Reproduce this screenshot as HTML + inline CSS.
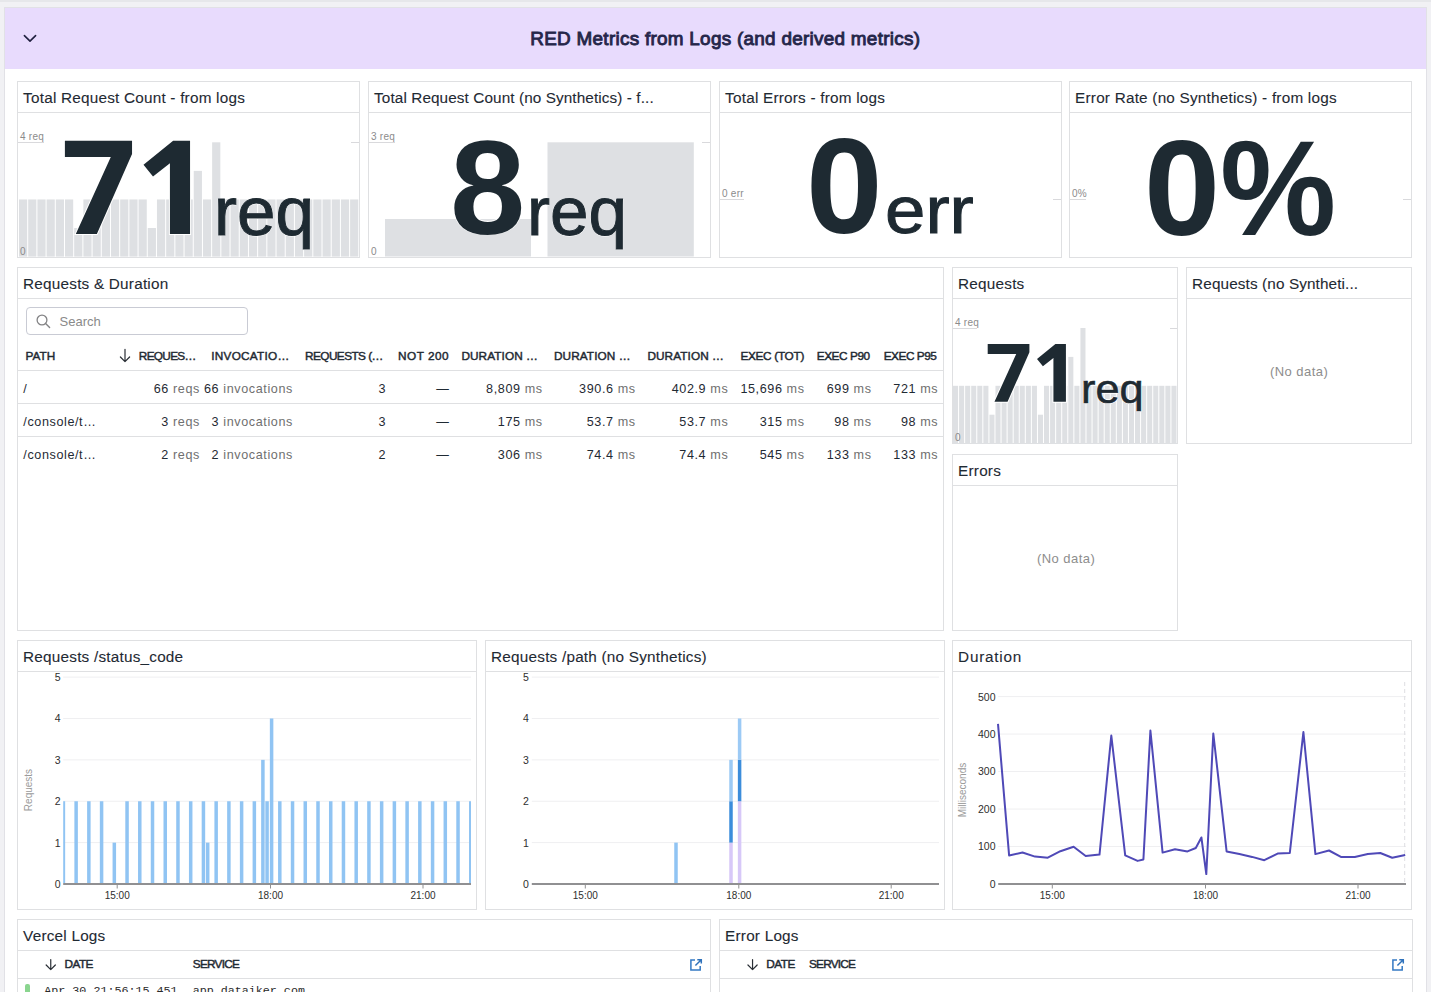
<!DOCTYPE html><html><head><meta charset="utf-8"><title>RED Metrics</title><style>
*{box-sizing:border-box;margin:0;padding:0}
html,body{width:1431px;height:992px;overflow:hidden;background:#f1f1f4;font-family:"Liberation Sans",sans-serif;color:#1f2a33}
.a{position:absolute;white-space:nowrap}
.grp{position:absolute;left:4px;top:7px;width:1423px;height:1000px;background:#fff;border:1px solid #e1e1e6}
.ghead{position:absolute;left:5px;top:8px;width:1421px;height:61px;background:#e8dbfd}
.w{position:absolute;border:1px solid #dfe0e2;background:#fff}
.wt{position:absolute;left:0;top:0;right:0;height:31px;border-bottom:1px solid #dfe0e2}
.t{position:absolute;white-space:nowrap;font-size:15px;line-height:15px;color:#1f2a33;letter-spacing:0.25px}
.lbl{position:absolute;white-space:nowrap;font-size:10px;line-height:10px;color:#8b8b8b;letter-spacing:0.25px}
.big{position:absolute;white-space:nowrap;color:#1e2a32;line-height:1}
.nd{position:absolute;white-space:nowrap;font-size:13px;line-height:13px;color:#8d8d8d;letter-spacing:0.45px}
.th{position:absolute;white-space:nowrap;font-size:12px;line-height:12px;font-weight:bold;color:#1f2a33;letter-spacing:0.1px}
.td{position:absolute;white-space:nowrap;font-size:13px;line-height:13px;color:#1f2a33}
.td span{color:#7a7a7a}
.ax{position:absolute;white-space:nowrap;font-size:10.5px;line-height:11px;color:#333}
</style></head><body>
<div class="a" style="left:0;top:0;width:1431px;height:2px;background:#e6e7ea"></div>
<div class="grp"></div>
<div class="ghead"></div>
<svg class="a" style="left:0;top:0" width="60" height="60" viewBox="0 0 60 60"><path d="M24.4 35.6 L30 41.1 L35.6 35.6" fill="none" stroke="#20203f" stroke-width="1.6" stroke-linecap="round" stroke-linejoin="round"/></svg>
<div class="a" style="left:530.30px;top:29.83px;font-size:18.9px;line-height:18.9px;font-weight:normal;color:#25264a;letter-spacing:0.28px;font-family:'Liberation Sans';-webkit-text-stroke:0.9px #25264a">RED Metrics from Logs (and derived metrics)</div>
<div class="w" style="left:17px;top:81px;width:343px;height:177px"><div class="wt"></div></div>
<div class="a" style="left:23.10px;top:89.70px;font-size:15.3px;line-height:15.3px;font-weight:normal;color:#1f2a33;letter-spacing:0.22px;font-family:'Liberation Sans';-webkit-text-stroke:0.1px #1f2a33">Total Request Count - from logs</div>
<div class="w" style="left:368px;top:81px;width:343px;height:177px"><div class="wt"></div></div>
<div class="a" style="left:374.10px;top:89.70px;font-size:15.3px;line-height:15.3px;font-weight:normal;color:#1f2a33;letter-spacing:0.1px;font-family:'Liberation Sans';-webkit-text-stroke:0.1px #1f2a33">Total Request Count (no Synthetics) - f...</div>
<div class="w" style="left:719px;top:81px;width:343px;height:177px"><div class="wt"></div></div>
<div class="a" style="left:725.10px;top:89.70px;font-size:15.3px;line-height:15.3px;font-weight:normal;color:#1f2a33;letter-spacing:0.22px;font-family:'Liberation Sans';-webkit-text-stroke:0.1px #1f2a33">Total Errors - from logs</div>
<div class="w" style="left:1069px;top:81px;width:343px;height:177px"><div class="wt"></div></div>
<div class="a" style="left:1075.10px;top:89.70px;font-size:15.3px;line-height:15.3px;font-weight:normal;color:#1f2a33;letter-spacing:0.22px;font-family:'Liberation Sans';-webkit-text-stroke:0.1px #1f2a33">Error Rate (no Synthetics) - from logs</div>
<div class="w" style="left:17px;top:267px;width:927px;height:364px"><div class="wt"></div></div>
<div class="a" style="left:23.10px;top:275.70px;font-size:15.3px;line-height:15.3px;font-weight:normal;color:#1f2a33;letter-spacing:0.22px;font-family:'Liberation Sans';-webkit-text-stroke:0.1px #1f2a33">Requests &amp; Duration</div>
<div class="w" style="left:952px;top:267px;width:226px;height:177px"><div class="wt"></div></div>
<div class="a" style="left:958.10px;top:275.70px;font-size:15.3px;line-height:15.3px;font-weight:normal;color:#1f2a33;letter-spacing:0.22px;font-family:'Liberation Sans';-webkit-text-stroke:0.1px #1f2a33">Requests</div>
<div class="w" style="left:1186px;top:267px;width:226px;height:177px"><div class="wt"></div></div>
<div class="a" style="left:1192.10px;top:275.70px;font-size:15.3px;line-height:15.3px;font-weight:normal;color:#1f2a33;letter-spacing:0.12px;font-family:'Liberation Sans';-webkit-text-stroke:0.1px #1f2a33">Requests (no Syntheti...</div>
<div class="w" style="left:952px;top:454px;width:226px;height:177px"><div class="wt"></div></div>
<div class="a" style="left:958.10px;top:462.70px;font-size:15.3px;line-height:15.3px;font-weight:normal;color:#1f2a33;letter-spacing:0.22px;font-family:'Liberation Sans';-webkit-text-stroke:0.1px #1f2a33">Errors</div>
<div class="w" style="left:17px;top:640px;width:460px;height:270px"><div class="wt"></div></div>
<div class="a" style="left:23.10px;top:648.70px;font-size:15.3px;line-height:15.3px;font-weight:normal;color:#1f2a33;letter-spacing:0.22px;font-family:'Liberation Sans';-webkit-text-stroke:0.1px #1f2a33">Requests /status_code</div>
<div class="w" style="left:485px;top:640px;width:460px;height:270px"><div class="wt"></div></div>
<div class="a" style="left:491.10px;top:648.70px;font-size:15.3px;line-height:15.3px;font-weight:normal;color:#1f2a33;letter-spacing:0.22px;font-family:'Liberation Sans';-webkit-text-stroke:0.1px #1f2a33">Requests /path (no Synthetics)</div>
<div class="w" style="left:952px;top:640px;width:460px;height:270px"><div class="wt"></div></div>
<div class="a" style="left:958.10px;top:648.70px;font-size:15.3px;line-height:15.3px;font-weight:normal;color:#1f2a33;letter-spacing:0.75px;font-family:'Liberation Sans';-webkit-text-stroke:0.1px #1f2a33">Duration</div>
<div class="w" style="left:17px;top:919px;width:694px;height:100px"><div class="wt"></div></div>
<div class="a" style="left:23.10px;top:927.70px;font-size:15.3px;line-height:15.3px;font-weight:normal;color:#1f2a33;letter-spacing:0.22px;font-family:'Liberation Sans';-webkit-text-stroke:0.1px #1f2a33">Vercel Logs</div>
<div class="w" style="left:719px;top:919px;width:694px;height:100px"><div class="wt"></div></div>
<div class="a" style="left:725.10px;top:927.70px;font-size:15.3px;line-height:15.3px;font-weight:normal;color:#1f2a33;letter-spacing:0.22px;font-family:'Liberation Sans';-webkit-text-stroke:0.1px #1f2a33">Error Logs</div>
<svg class="a" style="left:0;top:0" width="1431" height="992"><g fill="#dee0e3"><rect x="19.00" y="199.45" width="8.20" height="57.15"/><rect x="28.20" y="199.45" width="8.20" height="57.15"/><rect x="37.39" y="199.45" width="8.20" height="57.15"/><rect x="46.59" y="199.45" width="8.20" height="57.15"/><rect x="55.79" y="199.45" width="8.20" height="57.15"/><rect x="64.99" y="199.45" width="8.20" height="57.15"/><rect x="74.18" y="228.03" width="8.20" height="28.57"/><rect x="83.38" y="199.45" width="8.20" height="57.15"/><rect x="92.58" y="199.45" width="8.20" height="57.15"/><rect x="101.78" y="199.45" width="8.20" height="57.15"/><rect x="110.97" y="199.45" width="8.20" height="57.15"/><rect x="120.17" y="199.45" width="8.20" height="57.15"/><rect x="129.37" y="199.45" width="8.20" height="57.15"/><rect x="138.56" y="199.45" width="8.20" height="57.15"/><rect x="147.76" y="228.03" width="8.20" height="28.57"/><rect x="156.96" y="199.45" width="8.20" height="57.15"/><rect x="166.16" y="199.45" width="8.20" height="57.15"/><rect x="175.35" y="199.45" width="8.20" height="57.15"/><rect x="184.55" y="199.45" width="8.20" height="57.15"/><rect x="193.75" y="170.88" width="8.20" height="85.73"/><rect x="202.95" y="199.45" width="8.20" height="57.15"/><rect x="212.14" y="142.30" width="8.20" height="114.30"/><rect x="221.34" y="199.45" width="8.20" height="57.15"/><rect x="230.54" y="199.45" width="8.20" height="57.15"/><rect x="239.74" y="199.45" width="8.20" height="57.15"/><rect x="248.93" y="199.45" width="8.20" height="57.15"/><rect x="258.13" y="199.45" width="8.20" height="57.15"/><rect x="267.33" y="199.45" width="8.20" height="57.15"/><rect x="276.52" y="199.45" width="8.20" height="57.15"/><rect x="285.72" y="199.45" width="8.20" height="57.15"/><rect x="294.92" y="199.45" width="8.20" height="57.15"/><rect x="304.12" y="199.45" width="8.20" height="57.15"/><rect x="313.31" y="199.45" width="8.20" height="57.15"/><rect x="322.51" y="199.45" width="8.20" height="57.15"/><rect x="331.71" y="199.45" width="8.20" height="57.15"/><rect x="340.91" y="199.45" width="8.20" height="57.15"/><rect x="350.10" y="199.45" width="8.20" height="57.15"/></g></svg>
<svg class="a" style="left:0;top:0" width="1431" height="992"><g fill="#dee0e3"><rect x="953.00" y="385.80" width="5.07" height="57.80"/><rect x="959.07" y="385.80" width="5.07" height="57.80"/><rect x="965.14" y="385.80" width="5.07" height="57.80"/><rect x="971.20" y="385.80" width="5.07" height="57.80"/><rect x="977.27" y="385.80" width="5.07" height="57.80"/><rect x="983.34" y="385.80" width="5.07" height="57.80"/><rect x="989.41" y="414.70" width="5.07" height="28.90"/><rect x="995.47" y="385.80" width="5.07" height="57.80"/><rect x="1001.54" y="385.80" width="5.07" height="57.80"/><rect x="1007.61" y="385.80" width="5.07" height="57.80"/><rect x="1013.68" y="385.80" width="5.07" height="57.80"/><rect x="1019.74" y="385.80" width="5.07" height="57.80"/><rect x="1025.81" y="385.80" width="5.07" height="57.80"/><rect x="1031.88" y="385.80" width="5.07" height="57.80"/><rect x="1037.95" y="414.70" width="5.07" height="28.90"/><rect x="1044.01" y="385.80" width="5.07" height="57.80"/><rect x="1050.08" y="385.80" width="5.07" height="57.80"/><rect x="1056.15" y="385.80" width="5.07" height="57.80"/><rect x="1062.22" y="385.80" width="5.07" height="57.80"/><rect x="1068.28" y="356.90" width="5.07" height="86.70"/><rect x="1074.35" y="385.80" width="5.07" height="57.80"/><rect x="1080.42" y="328.00" width="5.07" height="115.60"/><rect x="1086.49" y="385.80" width="5.07" height="57.80"/><rect x="1092.55" y="385.80" width="5.07" height="57.80"/><rect x="1098.62" y="385.80" width="5.07" height="57.80"/><rect x="1104.69" y="385.80" width="5.07" height="57.80"/><rect x="1110.76" y="385.80" width="5.07" height="57.80"/><rect x="1116.82" y="385.80" width="5.07" height="57.80"/><rect x="1122.89" y="385.80" width="5.07" height="57.80"/><rect x="1128.96" y="385.80" width="5.07" height="57.80"/><rect x="1135.03" y="385.80" width="5.07" height="57.80"/><rect x="1141.09" y="385.80" width="5.07" height="57.80"/><rect x="1147.16" y="385.80" width="5.07" height="57.80"/><rect x="1153.23" y="385.80" width="5.07" height="57.80"/><rect x="1159.30" y="385.80" width="5.07" height="57.80"/><rect x="1165.36" y="385.80" width="5.07" height="57.80"/><rect x="1171.43" y="385.80" width="5.07" height="57.80"/></g></svg>
<svg class="a" style="left:0;top:0" width="1431" height="992"><g fill="#dee0e3"><rect x="385" y="219" width="146" height="37.5"/><rect x="547.5" y="142.3" width="146.3" height="114.2"/></g></svg>
<div class="lbl" style="left:20px;top:131.5px">4 req</div>
<div class="a" style="left:18px;top:142px;width:26px;height:1px;background:#d9d9dc"></div>
<div class="a" style="left:351px;top:142px;width:8px;height:1px;background:#d9d9dc"></div>
<div class="lbl" style="left:20px;top:247px">0</div>
<div class="lbl" style="left:371px;top:131.5px">3 req</div>
<div class="a" style="left:369px;top:142px;width:26px;height:1px;background:#d9d9dc"></div>
<div class="a" style="left:702px;top:142px;width:8px;height:1px;background:#d9d9dc"></div>
<div class="lbl" style="left:371px;top:247px">0</div>
<div class="lbl" style="left:722px;top:189px">0 err</div>
<div class="a" style="left:720px;top:199px;width:24px;height:1px;background:#d9d9dc"></div>
<div class="a" style="left:1053px;top:199px;width:8px;height:1px;background:#d9d9dc"></div>
<div class="lbl" style="left:1072px;top:189px">0%</div>
<div class="a" style="left:1070px;top:199px;width:16px;height:1px;background:#d9d9dc"></div>
<div class="a" style="left:1403px;top:199px;width:8px;height:1px;background:#d9d9dc"></div>
<div class="lbl" style="left:955px;top:318px">4 req</div>
<div class="a" style="left:953px;top:328px;width:24px;height:1px;background:#d9d9dc"></div>
<div class="a" style="left:1170px;top:328px;width:7px;height:1px;background:#d9d9dc"></div>
<div class="lbl" style="left:955px;top:433px">0</div>
<svg class="a" style="left:0;top:0" width="1431" height="992"><path fill="#1e2a32" stroke="#fff" stroke-width="2" paint-order="stroke" stroke-linejoin="miter" d="M64.90 140.70 L132.04 140.70 L132.04 154.03 L96.87 233.90 L75.80 233.90 L110.80 157.04 L64.90 157.04 Z M173.14 140.70 L190.05 140.70 L190.05 233.90 L169.93 233.90 L169.93 163.23 L153.01 176.54 L143.50 164.83 Z"/></svg>
<div class="big" style="left:213.99px;top:177.71px;font-size:69px;font-weight:normal;transform-origin:0 0;transform:scale(1.0022,0.9902);color:#1e2a32;-webkit-text-stroke:1.0px #1e2a32;text-shadow:0.8px 0 #fff,-0.8px 0 #fff,0 0.8px #fff,0 -0.8px #fff">req</div>
<div class="big" style="left:449.53px;top:119.88px;font-size:130px;font-weight:bold;transform-origin:0 0;transform:scale(1.0422,1.0326);color:#1e2a32;-webkit-text-stroke:0px #1e2a32;text-shadow:0.8px 0 #fff,-0.8px 0 #fff,0 0.8px #fff,0 -0.8px #fff">8</div>
<div class="big" style="left:527.49px;top:176.68px;font-size:69px;font-weight:normal;transform-origin:0 0;transform:scale(1.0033,1.0059);color:#1e2a32;-webkit-text-stroke:1.0px #1e2a32;text-shadow:0.8px 0 #fff,-0.8px 0 #fff,0 0.8px #fff,0 -0.8px #fff">req</div>
<div class="big" style="left:805.60px;top:119.34px;font-size:130px;font-weight:bold;transform-origin:0 0;transform:scale(1.0597,1.0402);color:#1e2a32;-webkit-text-stroke:0px #1e2a32;text-shadow:0.8px 0 #fff,-0.8px 0 #fff,0 0.8px #fff,0 -0.8px #fff">0</div>
<div class="big" style="left:884.60px;top:177.74px;font-size:69px;font-weight:normal;transform-origin:0 0;transform:scale(1.0524,0.9553);color:#1e2a32;-webkit-text-stroke:1.0px #1e2a32;text-shadow:0.8px 0 #fff,-0.8px 0 #fff,0 0.8px #fff,0 -0.8px #fff">err</div>
<div class="big" style="left:1144.23px;top:120.22px;font-size:130px;font-weight:bold;transform-origin:0 0;transform:scale(1.0532,1.0413);color:#1e2a32;-webkit-text-stroke:0px #1e2a32;text-shadow:0.8px 0 #fff,-0.8px 0 #fff,0 0.8px #fff,0 -0.8px #fff">0</div>
<div class="big" style="left:1220.39px;top:120.22px;font-size:130px;font-weight:bold;transform-origin:0 0;transform:scale(1.0046,1.0413);color:#1e2a32;-webkit-text-stroke:0px #1e2a32;text-shadow:0.8px 0 #fff,-0.8px 0 #fff,0 0.8px #fff,0 -0.8px #fff">%</div>
<svg class="a" style="left:0;top:0" width="1431" height="992"><path fill="#1e2a32" stroke="#fff" stroke-width="2" paint-order="stroke" stroke-linejoin="miter" d="M987.70 343.90 L1029.41 343.90 L1029.41 352.18 L1007.56 401.80 L994.47 401.80 L1016.22 354.05 L987.70 354.05 Z M1055.41 343.90 L1065.92 343.90 L1065.92 401.80 L1053.42 401.80 L1053.42 357.89 L1042.91 366.16 L1037.00 358.89 Z"/></svg>
<div class="big" style="left:1080.95px;top:367.65px;font-size:44px;font-weight:normal;transform-origin:0 0;transform:scale(0.9845,0.9424);color:#1e2a32;-webkit-text-stroke:0.65px #1e2a32;text-shadow:0.8px 0 #fff,-0.8px 0 #fff,0 0.8px #fff,0 -0.8px #fff">req</div>
<div class="nd" style="left:1270px;top:365px">(No data)</div>
<div class="nd" style="left:1037px;top:552px">(No data)</div>
<div class="a" style="left:26px;top:307px;width:222px;height:28px;border:1px solid #c9cbd4;border-radius:4px;background:#fff"></div>
<svg class="a" style="left:0;top:0" width="300" height="400"><circle cx="42" cy="320" r="4.9" fill="none" stroke="#838385" stroke-width="1.3"/><path d="M45.6 323.6 L49.6 327.6" stroke="#838385" stroke-width="1.4" stroke-linecap="round"/></svg>
<div class="a" style="left:59.50px;top:314.70px;font-size:13px;line-height:13px;font-weight:normal;color:#8a8a8a;letter-spacing:0px;font-family:'Liberation Sans'">Search</div>
<div class="a" style="left:25.60px;top:351.26px;font-size:11.8px;line-height:11.8px;font-weight:normal;color:#1f2a33;letter-spacing:0px;font-family:'Liberation Sans';-webkit-text-stroke:0.45px #1f2a33">PATH</div>
<div class="a" style="left:138.80px;top:351.26px;font-size:11.8px;line-height:11.8px;font-weight:normal;color:#1f2a33;letter-spacing:-0.68px;font-family:'Liberation Sans';-webkit-text-stroke:0.45px #1f2a33">REQUES…</div>
<div class="a" style="left:211.30px;top:351.26px;font-size:11.8px;line-height:11.8px;font-weight:normal;color:#1f2a33;letter-spacing:0.24px;font-family:'Liberation Sans';-webkit-text-stroke:0.45px #1f2a33">INVOCATIO…</div>
<div class="a" style="left:305.00px;top:351.26px;font-size:11.8px;line-height:11.8px;font-weight:normal;color:#1f2a33;letter-spacing:-0.56px;font-family:'Liberation Sans';-webkit-text-stroke:0.45px #1f2a33">REQUESTS (…</div>
<div class="a" style="left:398.00px;top:351.26px;font-size:11.8px;line-height:11.8px;font-weight:normal;color:#1f2a33;letter-spacing:0.5px;font-family:'Liberation Sans';-webkit-text-stroke:0.45px #1f2a33">NOT 200</div>
<div class="a" style="left:461.40px;top:351.26px;font-size:11.8px;line-height:11.8px;font-weight:normal;color:#1f2a33;letter-spacing:0.08px;font-family:'Liberation Sans';-webkit-text-stroke:0.45px #1f2a33">DURATION …</div>
<div class="a" style="left:554.00px;top:351.26px;font-size:11.8px;line-height:11.8px;font-weight:normal;color:#1f2a33;letter-spacing:0.08px;font-family:'Liberation Sans';-webkit-text-stroke:0.45px #1f2a33">DURATION …</div>
<div class="a" style="left:647.40px;top:351.26px;font-size:11.8px;line-height:11.8px;font-weight:normal;color:#1f2a33;letter-spacing:0.08px;font-family:'Liberation Sans';-webkit-text-stroke:0.45px #1f2a33">DURATION …</div>
<div class="a" style="left:740.40px;top:351.26px;font-size:11.8px;line-height:11.8px;font-weight:normal;color:#1f2a33;letter-spacing:-0.3px;font-family:'Liberation Sans';-webkit-text-stroke:0.45px #1f2a33">EXEC (TOT)</div>
<div class="a" style="left:816.70px;top:351.26px;font-size:11.8px;line-height:11.8px;font-weight:normal;color:#1f2a33;letter-spacing:-0.43px;font-family:'Liberation Sans';-webkit-text-stroke:0.45px #1f2a33">EXEC P90</div>
<div class="a" style="left:883.70px;top:351.26px;font-size:11.8px;line-height:11.8px;font-weight:normal;color:#1f2a33;letter-spacing:-0.47px;font-family:'Liberation Sans';-webkit-text-stroke:0.45px #1f2a33">EXEC P95</div>
<svg class="a" style="left:0;top:0" width="1431" height="992"><path d="M125.00 349.30 L125.00 361.60 M120.40 357.00 L125.00 361.60 L129.60 357.00" fill="none" stroke="#2a2f36" stroke-width="1.2" stroke-linecap="round" stroke-linejoin="round"/></svg>
<div class="a" style="left:18px;top:370px;width:925px;height:1px;background:#dfe0e2"></div>
<div class="a" style="left:18px;top:403px;width:925px;height:1px;background:#dfe0e2"></div>
<div class="a" style="left:18px;top:436px;width:925px;height:1px;background:#dfe0e2"></div>
<div class="a" style="left:23.30px;top:383.36px;font-size:12.6px;line-height:12.6px;font-weight:normal;color:#1f2a33;letter-spacing:0.6px;font-family:'Liberation Sans'">/</div>
<div class="a" style="right:1231.10px;top:383.36px;font-size:12.6px;line-height:12.6px;font-weight:normal;color:#1f2a33;letter-spacing:0.6px;font-family:'Liberation Sans';text-align:right">66<span style="color:#6f6f6f"> reqs</span></div>
<div class="a" style="right:1138.10px;top:383.36px;font-size:12.6px;line-height:12.6px;font-weight:normal;color:#1f2a33;letter-spacing:0.6px;font-family:'Liberation Sans';text-align:right">66<span style="color:#6f6f6f"> invocations</span></div>
<div class="a" style="right:1044.90px;top:383.36px;font-size:12.6px;line-height:12.6px;font-weight:normal;color:#1f2a33;letter-spacing:0.6px;font-family:'Liberation Sans';text-align:right">3</div>
<div class="a" style="right:981.50px;top:383.36px;font-size:12.6px;line-height:12.6px;font-weight:normal;color:#1f2a33;letter-spacing:0.6px;font-family:'Liberation Sans';text-align:right">—</div>
<div class="a" style="right:888.30px;top:383.36px;font-size:12.6px;line-height:12.6px;font-weight:normal;color:#1f2a33;letter-spacing:0.6px;font-family:'Liberation Sans';text-align:right">8,809<span style="color:#6f6f6f"> ms</span></div>
<div class="a" style="right:795.30px;top:383.36px;font-size:12.6px;line-height:12.6px;font-weight:normal;color:#1f2a33;letter-spacing:0.6px;font-family:'Liberation Sans';text-align:right">390.6<span style="color:#6f6f6f"> ms</span></div>
<div class="a" style="right:702.70px;top:383.36px;font-size:12.6px;line-height:12.6px;font-weight:normal;color:#1f2a33;letter-spacing:0.6px;font-family:'Liberation Sans';text-align:right">402.9<span style="color:#6f6f6f"> ms</span></div>
<div class="a" style="right:626.40px;top:383.36px;font-size:12.6px;line-height:12.6px;font-weight:normal;color:#1f2a33;letter-spacing:0.6px;font-family:'Liberation Sans';text-align:right">15,696<span style="color:#6f6f6f"> ms</span></div>
<div class="a" style="right:559.40px;top:383.36px;font-size:12.6px;line-height:12.6px;font-weight:normal;color:#1f2a33;letter-spacing:0.6px;font-family:'Liberation Sans';text-align:right">699<span style="color:#6f6f6f"> ms</span></div>
<div class="a" style="right:492.80px;top:383.36px;font-size:12.6px;line-height:12.6px;font-weight:normal;color:#1f2a33;letter-spacing:0.6px;font-family:'Liberation Sans';text-align:right">721<span style="color:#6f6f6f"> ms</span></div>
<div class="a" style="left:23.30px;top:416.36px;font-size:12.6px;line-height:12.6px;font-weight:normal;color:#1f2a33;letter-spacing:0.6px;font-family:'Liberation Sans'">/console/t…</div>
<div class="a" style="right:1231.10px;top:416.36px;font-size:12.6px;line-height:12.6px;font-weight:normal;color:#1f2a33;letter-spacing:0.6px;font-family:'Liberation Sans';text-align:right">3<span style="color:#6f6f6f"> reqs</span></div>
<div class="a" style="right:1138.10px;top:416.36px;font-size:12.6px;line-height:12.6px;font-weight:normal;color:#1f2a33;letter-spacing:0.6px;font-family:'Liberation Sans';text-align:right">3<span style="color:#6f6f6f"> invocations</span></div>
<div class="a" style="right:1044.90px;top:416.36px;font-size:12.6px;line-height:12.6px;font-weight:normal;color:#1f2a33;letter-spacing:0.6px;font-family:'Liberation Sans';text-align:right">3</div>
<div class="a" style="right:981.50px;top:416.36px;font-size:12.6px;line-height:12.6px;font-weight:normal;color:#1f2a33;letter-spacing:0.6px;font-family:'Liberation Sans';text-align:right">—</div>
<div class="a" style="right:888.30px;top:416.36px;font-size:12.6px;line-height:12.6px;font-weight:normal;color:#1f2a33;letter-spacing:0.6px;font-family:'Liberation Sans';text-align:right">175<span style="color:#6f6f6f"> ms</span></div>
<div class="a" style="right:795.30px;top:416.36px;font-size:12.6px;line-height:12.6px;font-weight:normal;color:#1f2a33;letter-spacing:0.6px;font-family:'Liberation Sans';text-align:right">53.7<span style="color:#6f6f6f"> ms</span></div>
<div class="a" style="right:702.70px;top:416.36px;font-size:12.6px;line-height:12.6px;font-weight:normal;color:#1f2a33;letter-spacing:0.6px;font-family:'Liberation Sans';text-align:right">53.7<span style="color:#6f6f6f"> ms</span></div>
<div class="a" style="right:626.40px;top:416.36px;font-size:12.6px;line-height:12.6px;font-weight:normal;color:#1f2a33;letter-spacing:0.6px;font-family:'Liberation Sans';text-align:right">315<span style="color:#6f6f6f"> ms</span></div>
<div class="a" style="right:559.40px;top:416.36px;font-size:12.6px;line-height:12.6px;font-weight:normal;color:#1f2a33;letter-spacing:0.6px;font-family:'Liberation Sans';text-align:right">98<span style="color:#6f6f6f"> ms</span></div>
<div class="a" style="right:492.80px;top:416.36px;font-size:12.6px;line-height:12.6px;font-weight:normal;color:#1f2a33;letter-spacing:0.6px;font-family:'Liberation Sans';text-align:right">98<span style="color:#6f6f6f"> ms</span></div>
<div class="a" style="left:23.30px;top:449.36px;font-size:12.6px;line-height:12.6px;font-weight:normal;color:#1f2a33;letter-spacing:0.6px;font-family:'Liberation Sans'">/console/t…</div>
<div class="a" style="right:1231.10px;top:449.36px;font-size:12.6px;line-height:12.6px;font-weight:normal;color:#1f2a33;letter-spacing:0.6px;font-family:'Liberation Sans';text-align:right">2<span style="color:#6f6f6f"> reqs</span></div>
<div class="a" style="right:1138.10px;top:449.36px;font-size:12.6px;line-height:12.6px;font-weight:normal;color:#1f2a33;letter-spacing:0.6px;font-family:'Liberation Sans';text-align:right">2<span style="color:#6f6f6f"> invocations</span></div>
<div class="a" style="right:1044.90px;top:449.36px;font-size:12.6px;line-height:12.6px;font-weight:normal;color:#1f2a33;letter-spacing:0.6px;font-family:'Liberation Sans';text-align:right">2</div>
<div class="a" style="right:981.50px;top:449.36px;font-size:12.6px;line-height:12.6px;font-weight:normal;color:#1f2a33;letter-spacing:0.6px;font-family:'Liberation Sans';text-align:right">—</div>
<div class="a" style="right:888.30px;top:449.36px;font-size:12.6px;line-height:12.6px;font-weight:normal;color:#1f2a33;letter-spacing:0.6px;font-family:'Liberation Sans';text-align:right">306<span style="color:#6f6f6f"> ms</span></div>
<div class="a" style="right:795.30px;top:449.36px;font-size:12.6px;line-height:12.6px;font-weight:normal;color:#1f2a33;letter-spacing:0.6px;font-family:'Liberation Sans';text-align:right">74.4<span style="color:#6f6f6f"> ms</span></div>
<div class="a" style="right:702.70px;top:449.36px;font-size:12.6px;line-height:12.6px;font-weight:normal;color:#1f2a33;letter-spacing:0.6px;font-family:'Liberation Sans';text-align:right">74.4<span style="color:#6f6f6f"> ms</span></div>
<div class="a" style="right:626.40px;top:449.36px;font-size:12.6px;line-height:12.6px;font-weight:normal;color:#1f2a33;letter-spacing:0.6px;font-family:'Liberation Sans';text-align:right">545<span style="color:#6f6f6f"> ms</span></div>
<div class="a" style="right:559.40px;top:449.36px;font-size:12.6px;line-height:12.6px;font-weight:normal;color:#1f2a33;letter-spacing:0.6px;font-family:'Liberation Sans';text-align:right">133<span style="color:#6f6f6f"> ms</span></div>
<div class="a" style="right:492.80px;top:449.36px;font-size:12.6px;line-height:12.6px;font-weight:normal;color:#1f2a33;letter-spacing:0.6px;font-family:'Liberation Sans';text-align:right">133<span style="color:#6f6f6f"> ms</span></div>
<svg class="a" style="left:0;top:0" width="1431" height="992"><line x1="63.2" y1="842.62" x2="471" y2="842.62" stroke="#efeff1" stroke-width="1"/><line x1="63.2" y1="801.24" x2="471" y2="801.24" stroke="#efeff1" stroke-width="1"/><line x1="63.2" y1="759.86" x2="471" y2="759.86" stroke="#efeff1" stroke-width="1"/><line x1="63.2" y1="718.48" x2="471" y2="718.48" stroke="#efeff1" stroke-width="1"/><line x1="63.2" y1="677.10" x2="471" y2="677.10" stroke="#efeff1" stroke-width="1"/><line x1="63.2" y1="884" x2="471" y2="884" stroke="#909092" stroke-width="2"/><line x1="117.2" y1="884" x2="117.2" y2="888.5" stroke="#909092" stroke-width="1"/><line x1="270.5" y1="884" x2="270.5" y2="888.5" stroke="#909092" stroke-width="1"/><line x1="423.0" y1="884" x2="423.0" y2="888.5" stroke="#909092" stroke-width="1"/></svg>
<div class="a" style="right:1370.50px;top:878.93px;font-size:10.5px;line-height:10.5px;font-weight:normal;color:#2e2e2e;letter-spacing:0px;font-family:'Liberation Sans';text-align:right">0</div>
<div class="a" style="right:1370.50px;top:837.55px;font-size:10.5px;line-height:10.5px;font-weight:normal;color:#2e2e2e;letter-spacing:0px;font-family:'Liberation Sans';text-align:right">1</div>
<div class="a" style="right:1370.50px;top:796.17px;font-size:10.5px;line-height:10.5px;font-weight:normal;color:#2e2e2e;letter-spacing:0px;font-family:'Liberation Sans';text-align:right">2</div>
<div class="a" style="right:1370.50px;top:754.79px;font-size:10.5px;line-height:10.5px;font-weight:normal;color:#2e2e2e;letter-spacing:0px;font-family:'Liberation Sans';text-align:right">3</div>
<div class="a" style="right:1370.50px;top:713.41px;font-size:10.5px;line-height:10.5px;font-weight:normal;color:#2e2e2e;letter-spacing:0px;font-family:'Liberation Sans';text-align:right">4</div>
<div class="a" style="right:1370.50px;top:672.03px;font-size:10.5px;line-height:10.5px;font-weight:normal;color:#2e2e2e;letter-spacing:0px;font-family:'Liberation Sans';text-align:right">5</div>
<div class="a" style="left:-82.80px;width:400px;top:890.90px;font-size:10px;line-height:10px;font-weight:normal;color:#2e2e2e;letter-spacing:0px;font-family:'Liberation Sans';text-align:center">15:00</div>
<div class="a" style="left:70.50px;width:400px;top:890.90px;font-size:10px;line-height:10px;font-weight:normal;color:#2e2e2e;letter-spacing:0px;font-family:'Liberation Sans';text-align:center">18:00</div>
<div class="a" style="left:223.00px;width:400px;top:890.90px;font-size:10px;line-height:10px;font-weight:normal;color:#2e2e2e;letter-spacing:0px;font-family:'Liberation Sans';text-align:center">21:00</div>
<div class="a" style="left:-71.5px;top:784px;width:200px;height:12px;line-height:12px;font-size:10px;color:#9a9a9a;text-align:center;transform:rotate(-90deg);transform-origin:100px 6px">Requests</div>
<svg class="a" style="left:0;top:0" width="1431" height="992"><rect x="63.20" y="801.24" width="1.95" height="81.76" fill="#90c4f3"/><rect x="74.38" y="801.24" width="3.50" height="81.76" fill="#90c4f3"/><rect x="87.11" y="801.24" width="3.50" height="81.76" fill="#90c4f3"/><rect x="99.84" y="801.24" width="3.50" height="81.76" fill="#90c4f3"/><rect x="112.57" y="842.62" width="3.50" height="40.38" fill="#90c4f3"/><rect x="125.30" y="801.24" width="3.50" height="81.76" fill="#90c4f3"/><rect x="138.03" y="801.24" width="3.50" height="81.76" fill="#90c4f3"/><rect x="150.76" y="801.24" width="3.50" height="81.76" fill="#90c4f3"/><rect x="163.49" y="801.24" width="3.50" height="81.76" fill="#90c4f3"/><rect x="176.22" y="801.24" width="3.50" height="81.76" fill="#90c4f3"/><rect x="188.95" y="801.24" width="3.50" height="81.76" fill="#90c4f3"/><rect x="201.68" y="801.24" width="3.50" height="81.76" fill="#90c4f3"/><rect x="214.41" y="801.24" width="3.50" height="81.76" fill="#90c4f3"/><rect x="227.14" y="801.24" width="3.50" height="81.76" fill="#90c4f3"/><rect x="239.87" y="801.24" width="3.50" height="81.76" fill="#90c4f3"/><rect x="252.60" y="801.24" width="3.50" height="81.76" fill="#90c4f3"/><rect x="265.33" y="801.24" width="3.50" height="81.76" fill="#90c4f3"/><rect x="278.06" y="801.24" width="3.50" height="81.76" fill="#90c4f3"/><rect x="290.79" y="801.24" width="3.50" height="81.76" fill="#90c4f3"/><rect x="303.52" y="801.24" width="3.50" height="81.76" fill="#90c4f3"/><rect x="316.25" y="801.24" width="3.50" height="81.76" fill="#90c4f3"/><rect x="328.98" y="801.24" width="3.50" height="81.76" fill="#90c4f3"/><rect x="341.71" y="801.24" width="3.50" height="81.76" fill="#90c4f3"/><rect x="354.44" y="801.24" width="3.50" height="81.76" fill="#90c4f3"/><rect x="367.17" y="801.24" width="3.50" height="81.76" fill="#90c4f3"/><rect x="379.90" y="801.24" width="3.50" height="81.76" fill="#90c4f3"/><rect x="392.63" y="801.24" width="3.50" height="81.76" fill="#90c4f3"/><rect x="405.36" y="801.24" width="3.50" height="81.76" fill="#90c4f3"/><rect x="418.09" y="801.24" width="3.50" height="81.76" fill="#90c4f3"/><rect x="430.82" y="801.24" width="3.50" height="81.76" fill="#90c4f3"/><rect x="443.55" y="801.24" width="3.50" height="81.76" fill="#90c4f3"/><rect x="456.28" y="801.24" width="3.50" height="81.76" fill="#90c4f3"/><rect x="469.01" y="801.24" width="1.99" height="81.76" fill="#90c4f3"/><rect x="205.95" y="842.62" width="3.50" height="40.38" fill="#90c4f3"/><rect x="261.15" y="759.86" width="3.50" height="123.14" fill="#90c4f3"/><rect x="269.85" y="718.48" width="3.50" height="164.52" fill="#90c4f3"/></svg>
<svg class="a" style="left:0;top:0" width="1431" height="992"><line x1="531.8" y1="842.62" x2="939" y2="842.62" stroke="#efeff1" stroke-width="1"/><line x1="531.8" y1="801.24" x2="939" y2="801.24" stroke="#efeff1" stroke-width="1"/><line x1="531.8" y1="759.86" x2="939" y2="759.86" stroke="#efeff1" stroke-width="1"/><line x1="531.8" y1="718.48" x2="939" y2="718.48" stroke="#efeff1" stroke-width="1"/><line x1="531.8" y1="677.10" x2="939" y2="677.10" stroke="#efeff1" stroke-width="1"/><line x1="531.8" y1="884" x2="939" y2="884" stroke="#909092" stroke-width="2"/><line x1="585.3" y1="884" x2="585.3" y2="888.5" stroke="#909092" stroke-width="1"/><line x1="738.8" y1="884" x2="738.8" y2="888.5" stroke="#909092" stroke-width="1"/><line x1="891.2" y1="884" x2="891.2" y2="888.5" stroke="#909092" stroke-width="1"/></svg>
<div class="a" style="right:902.20px;top:878.93px;font-size:10.5px;line-height:10.5px;font-weight:normal;color:#2e2e2e;letter-spacing:0px;font-family:'Liberation Sans';text-align:right">0</div>
<div class="a" style="right:902.20px;top:837.55px;font-size:10.5px;line-height:10.5px;font-weight:normal;color:#2e2e2e;letter-spacing:0px;font-family:'Liberation Sans';text-align:right">1</div>
<div class="a" style="right:902.20px;top:796.17px;font-size:10.5px;line-height:10.5px;font-weight:normal;color:#2e2e2e;letter-spacing:0px;font-family:'Liberation Sans';text-align:right">2</div>
<div class="a" style="right:902.20px;top:754.79px;font-size:10.5px;line-height:10.5px;font-weight:normal;color:#2e2e2e;letter-spacing:0px;font-family:'Liberation Sans';text-align:right">3</div>
<div class="a" style="right:902.20px;top:713.41px;font-size:10.5px;line-height:10.5px;font-weight:normal;color:#2e2e2e;letter-spacing:0px;font-family:'Liberation Sans';text-align:right">4</div>
<div class="a" style="right:902.20px;top:672.03px;font-size:10.5px;line-height:10.5px;font-weight:normal;color:#2e2e2e;letter-spacing:0px;font-family:'Liberation Sans';text-align:right">5</div>
<div class="a" style="left:385.30px;width:400px;top:890.90px;font-size:10px;line-height:10px;font-weight:normal;color:#2e2e2e;letter-spacing:0px;font-family:'Liberation Sans';text-align:center">15:00</div>
<div class="a" style="left:538.80px;width:400px;top:890.90px;font-size:10px;line-height:10px;font-weight:normal;color:#2e2e2e;letter-spacing:0px;font-family:'Liberation Sans';text-align:center">18:00</div>
<div class="a" style="left:691.20px;width:400px;top:890.90px;font-size:10px;line-height:10px;font-weight:normal;color:#2e2e2e;letter-spacing:0px;font-family:'Liberation Sans';text-align:center">21:00</div>
<svg class="a" style="left:0;top:0" width="1431" height="992"><rect x="674.25" y="842.62" width="3.50" height="40.38" fill="#90c4f3"/><rect x="729.25" y="842.62" width="3.50" height="40.38" fill="#d7c8f8"/><rect x="729.25" y="801.24" width="3.50" height="41.38" fill="#3c8ddb"/><rect x="729.25" y="759.86" width="3.50" height="41.38" fill="#9ccaf5"/><rect x="737.85" y="801.24" width="3.50" height="81.76" fill="#d7c8f8"/><rect x="737.85" y="759.86" width="3.50" height="41.38" fill="#3c8ddb"/><rect x="737.85" y="718.48" width="3.50" height="41.38" fill="#9ccaf5"/></svg>
<svg class="a" style="left:0;top:0" width="1431" height="992"><line x1="998.2" y1="846.52" x2="1406" y2="846.52" stroke="#efeff1" stroke-width="1"/><line x1="998.2" y1="809.04" x2="1406" y2="809.04" stroke="#efeff1" stroke-width="1"/><line x1="998.2" y1="771.56" x2="1406" y2="771.56" stroke="#efeff1" stroke-width="1"/><line x1="998.2" y1="734.08" x2="1406" y2="734.08" stroke="#efeff1" stroke-width="1"/><line x1="998.2" y1="696.60" x2="1406" y2="696.60" stroke="#efeff1" stroke-width="1"/><line x1="998.2" y1="884" x2="1406" y2="884" stroke="#909092" stroke-width="2"/><line x1="1052.3" y1="884" x2="1052.3" y2="888.5" stroke="#909092" stroke-width="1"/><line x1="1205.5" y1="884" x2="1205.5" y2="888.5" stroke="#909092" stroke-width="1"/><line x1="1358.0" y1="884" x2="1358.0" y2="888.5" stroke="#909092" stroke-width="1"/></svg>
<div class="a" style="right:435.50px;top:878.93px;font-size:10.5px;line-height:10.5px;font-weight:normal;color:#2e2e2e;letter-spacing:0px;font-family:'Liberation Sans';text-align:right">0</div>
<div class="a" style="right:435.50px;top:841.45px;font-size:10.5px;line-height:10.5px;font-weight:normal;color:#2e2e2e;letter-spacing:0px;font-family:'Liberation Sans';text-align:right">100</div>
<div class="a" style="right:435.50px;top:803.97px;font-size:10.5px;line-height:10.5px;font-weight:normal;color:#2e2e2e;letter-spacing:0px;font-family:'Liberation Sans';text-align:right">200</div>
<div class="a" style="right:435.50px;top:766.49px;font-size:10.5px;line-height:10.5px;font-weight:normal;color:#2e2e2e;letter-spacing:0px;font-family:'Liberation Sans';text-align:right">300</div>
<div class="a" style="right:435.50px;top:729.01px;font-size:10.5px;line-height:10.5px;font-weight:normal;color:#2e2e2e;letter-spacing:0px;font-family:'Liberation Sans';text-align:right">400</div>
<div class="a" style="right:435.50px;top:691.53px;font-size:10.5px;line-height:10.5px;font-weight:normal;color:#2e2e2e;letter-spacing:0px;font-family:'Liberation Sans';text-align:right">500</div>
<div class="a" style="left:852.30px;width:400px;top:890.90px;font-size:10px;line-height:10px;font-weight:normal;color:#2e2e2e;letter-spacing:0px;font-family:'Liberation Sans';text-align:center">15:00</div>
<div class="a" style="left:1005.50px;width:400px;top:890.90px;font-size:10px;line-height:10px;font-weight:normal;color:#2e2e2e;letter-spacing:0px;font-family:'Liberation Sans';text-align:center">18:00</div>
<div class="a" style="left:1158.00px;width:400px;top:890.90px;font-size:10px;line-height:10px;font-weight:normal;color:#2e2e2e;letter-spacing:0px;font-family:'Liberation Sans';text-align:center">21:00</div>
<div class="a" style="left:863px;top:784px;width:200px;height:12px;line-height:12px;font-size:10px;color:#9a9a9a;text-align:center;transform:rotate(-90deg);transform-origin:100px 6px">Milliseconds</div>
<svg class="a" style="left:0;top:0" width="1431" height="992"><line x1="1404.7" y1="682" x2="1404.7" y2="884" stroke="#dedee2" stroke-width="1" stroke-dasharray="4,3"/><path d="M998.0 723.9 L1009.1 855.4 L1022.5 852.5 L1035.0 856.6 L1047.8 857.7 L1060.4 851.2 L1073.6 846.8 L1085.7 856.0 L1099.5 854.6 L1111.3 735.6 L1125.2 855.3 L1137.6 860.9 L1143.4 859.5 L1150.4 730.6 L1162.6 852.6 L1175.0 849.2 L1187.5 851.4 L1195.8 848.0 L1201.4 837.5 L1206.3 874.1 L1213.3 733.5 L1226.6 851.4 L1239.4 854.1 L1252.1 856.9 L1264.3 860.2 L1277.6 853.6 L1289.8 853.0 L1303.4 732.1 L1315.4 854.1 L1329.0 850.5 L1340.9 856.9 L1354.8 856.9 L1367.8 854.1 L1380.3 853.0 L1392.2 857.7 L1405.2 855.0" fill="none" stroke="#4f49b7" stroke-width="2" stroke-linejoin="round"/></svg>
<svg class="a" style="left:0;top:0" width="1431" height="992"><path d="M50.75 959.50 L50.75 969.60 M46.15 965.00 L50.75 969.60 L55.35 965.00" fill="none" stroke="#2a2f36" stroke-width="1.2" stroke-linecap="round" stroke-linejoin="round"/></svg>
<div class="a" style="left:64.40px;top:959.06px;font-size:11.8px;line-height:11.8px;font-weight:normal;color:#1f2a33;letter-spacing:-0.5px;font-family:'Liberation Sans';-webkit-text-stroke:0.45px #1f2a33">DATE</div>
<div class="a" style="left:192.80px;top:959.06px;font-size:11.8px;line-height:11.8px;font-weight:normal;color:#1f2a33;letter-spacing:-0.75px;font-family:'Liberation Sans';-webkit-text-stroke:0.45px #1f2a33">SERVICE</div>
<div class="a" style="left:18px;top:978px;width:692px;height:1px;background:#dfe0e2"></div>
<svg class="a" style="left:0;top:0" width="1431" height="992"><path d="M695.0 959.9 L690.9 959.9 L690.9 970.1 L700.2 970.1 L700.2 966.0" fill="none" stroke="#3479c4" stroke-width="1.5"/><path d="M695.4 965.5 L701.3 959.8 M697.3 959.8 L701.3 959.8 L701.3 963.6" fill="none" stroke="#2f72bb" stroke-width="1.5"/></svg>
<svg class="a" style="left:0;top:0" width="1431" height="992"><path d="M752.55 959.50 L752.55 969.60 M747.95 965.00 L752.55 969.60 L757.15 965.00" fill="none" stroke="#2a2f36" stroke-width="1.2" stroke-linecap="round" stroke-linejoin="round"/></svg>
<div class="a" style="left:766.20px;top:959.06px;font-size:11.8px;line-height:11.8px;font-weight:normal;color:#1f2a33;letter-spacing:-0.5px;font-family:'Liberation Sans';-webkit-text-stroke:0.45px #1f2a33">DATE</div>
<div class="a" style="left:808.90px;top:959.06px;font-size:11.8px;line-height:11.8px;font-weight:normal;color:#1f2a33;letter-spacing:-0.75px;font-family:'Liberation Sans';-webkit-text-stroke:0.45px #1f2a33">SERVICE</div>
<div class="a" style="left:720px;top:978px;width:692px;height:1px;background:#dfe0e2"></div>
<svg class="a" style="left:0;top:0" width="1431" height="992"><path d="M1397.0 959.9 L1392.9 959.9 L1392.9 970.1 L1402.2 970.1 L1402.2 966.0" fill="none" stroke="#3479c4" stroke-width="1.5"/><path d="M1397.4 965.5 L1403.3 959.8 M1399.3 959.8 L1403.3 959.8 L1403.3 963.6" fill="none" stroke="#2f72bb" stroke-width="1.5"/></svg>
<div class="a" style="left:25px;top:983.5px;width:4.7px;height:20px;background:#8ad58f;border-radius:2px"></div>
<div class="a" style="left:44.30px;top:985.95px;font-size:11.7px;line-height:11.7px;font-weight:normal;color:#2a2a2a;letter-spacing:0px;font-family:'Liberation Mono'">Apr 30 21:56:15.451</div>
<div class="a" style="left:192.70px;top:985.95px;font-size:11.7px;line-height:11.7px;font-weight:normal;color:#2a2a2a;letter-spacing:0px;font-family:'Liberation Mono'">app.dataiker.com</div>
</body></html>
